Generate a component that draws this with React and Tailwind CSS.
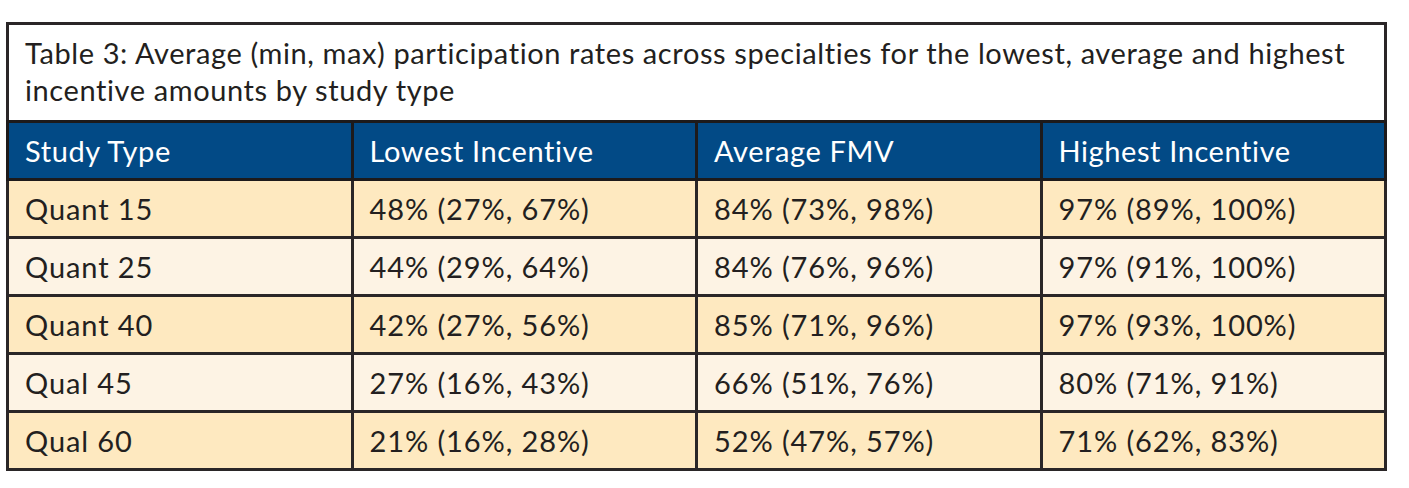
import React from "react";

const rows = [
  ["Quant 15", "48% (27%, 67%)", "84% (73%, 98%)", "97% (89%, 100%)"],
  ["Quant 25", "44% (29%, 64%)", "84% (76%, 96%)", "97% (91%, 100%)"],
  ["Quant 40", "42% (27%, 56%)", "85% (71%, 96%)", "97% (93%, 100%)"],
  ["Qual 45", "27% (16%, 43%)", "66% (51%, 76%)", "80% (71%, 91%)"],
  ["Qual 60", "21% (16%, 28%)", "52% (47%, 57%)", "71% (62%, 83%)"],
];

const headers = ["Study Type", "Lowest Incentive", "Average FMV", "Highest Incentive"];

const App = () => {
  return (
    <div
      className="min-h-[488px] bg-white pt-[22px] pl-[6px] text-[#231f20]"
      style={{ fontFamily: "Lato, 'Open Sans', sans-serif" }}
    >
      <div className="w-[1381px]">
        <div className="h-[98px] border-[3px] border-b-0 border-[#2a2627] px-[16px] pt-[9px] text-[29px] leading-[37px] tracking-[0.6px]">
          Table 3: Average (min, max) participation rates across specialties for the lowest, average and highest
          incentive amounts by study type
        </div>
        <table className="w-full table-fixed border-collapse">
          <thead>
            <tr className="h-[58px] bg-[#024a86] text-white">
              {headers.map((h) => (
                <th
                  key={h}
                  className="border-[3px] border-[#1d1a1b] px-[16px] text-left text-[29px] font-normal tracking-[0.6px]"
                >
                  {h}
                </th>
              ))}
            </tr>
          </thead>
          <tbody>
            {rows.map((row, i) => (
              <tr
                key={row[0]}
                className={`h-[58px] ${i % 2 === 0 ? "bg-[#fee9c0]" : "bg-[#fdf3e4]"}`}
              >
                {row.map((cell, j) => (
                  <td
                    key={j}
                    className="border-[3px] border-[#2a2627] px-[16px] text-[29px] tracking-[0.9px]"
                  >
                    {cell}
                  </td>
                ))}
              </tr>
            ))}
          </tbody>
        </table>
      </div>
    </div>
  );
};

export default App;
